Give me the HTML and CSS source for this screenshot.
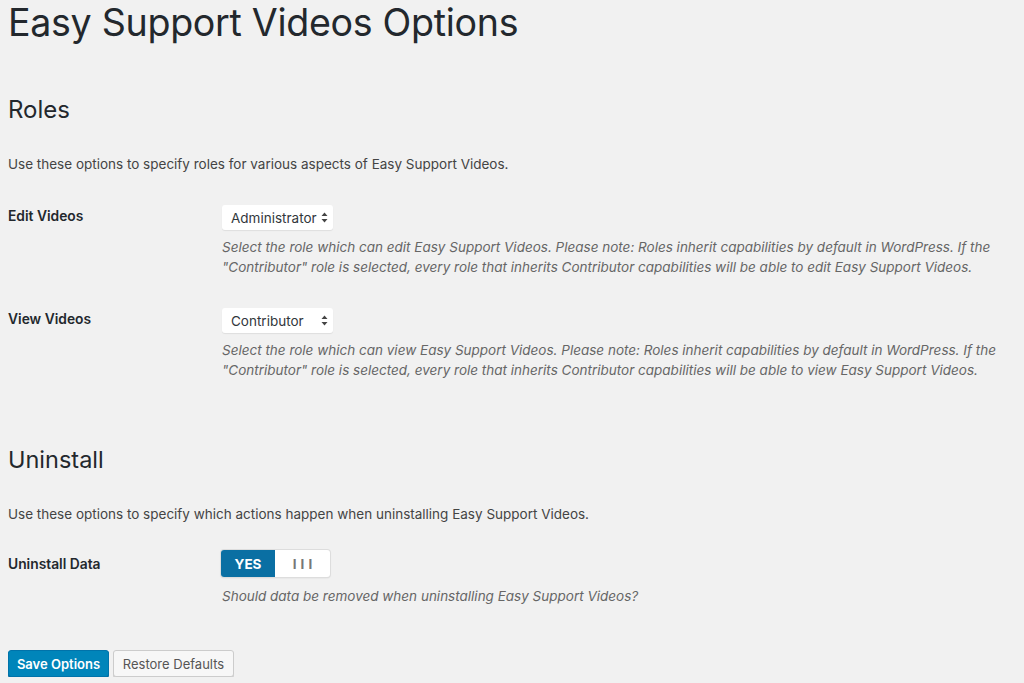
FILE: index.html
```html
<!DOCTYPE html>
<html>
<head>
<meta charset="utf-8">
<link rel="stylesheet" href="styles.css">
</head>
<body>
<div class="wrap">
  <h1 class="page-title">Easy Support Videos Options</h1>

  <h2 class="section-title first">Roles</h2>
  <p class="section-desc">Use these options to specify roles for various aspects of Easy Support Videos.</p>

  <div class="form-row">
    <div class="label">Edit Videos</div>
    <div class="field">
      <div class="select"><span>Administrator</span><svg class="arrows" width="7" height="11" viewBox="0 0 7 11"><path d="M3.5 0.5L6.5 4H0.5Z M3.5 10.5L6.5 7H0.5Z" fill="#444"/></svg></div>
      <p class="help">Select the role which can edit Easy Support Videos. Please note: Roles inherit capabilities by default in WordPress. If the "Contributor" role is selected, every role that inherits Contributor capabilities will be able to edit Easy Support Videos.</p>
    </div>
  </div>

  <div class="form-row">
    <div class="label">View Videos</div>
    <div class="field">
      <div class="select"><span>Contributor</span><svg class="arrows" width="7" height="11" viewBox="0 0 7 11"><path d="M3.5 0.5L6.5 4H0.5Z M3.5 10.5L6.5 7H0.5Z" fill="#444"/></svg></div>
      <p class="help">Select the role which can view Easy Support Videos. Please note: Roles inherit capabilities by default in WordPress. If the "Contributor" role is selected, every role that inherits Contributor capabilities will be able to view Easy Support Videos.</p>
    </div>
  </div>

  <h2 class="section-title second">Uninstall</h2>
  <p class="section-desc">Use these options to specify which actions happen when uninstalling Easy Support Videos.</p>

  <div class="form-row last-row">
    <div class="label">Uninstall Data</div>
    <div class="field toggle-field">
      <div class="toggle"><span class="toggle-on">YES</span><span class="toggle-off">III</span></div>
      <p class="help toggle-help">Should data be removed when uninstalling Easy Support Videos?</p>
    </div>
  </div>

  <div class="actions">
    <button class="btn btn-primary">Save Options</button>
    <button class="btn btn-secondary">Restore Defaults</button>
  </div>
</div>
</body>
</html>
```

FILE: styles.css
```css
html, body {
  margin: 0;
  padding: 0;
  background: #f1f1f1;
}
body {
  font-family: Inter, "Liberation Sans", sans-serif;
  color: #444;
  font-size: 13.5px;
}
.wrap {
  padding: 0 8px;
}
.page-title {
  margin: 0;
  padding-top: 1px;
  font-size: 37.6px;
  font-weight: 400;
  color: #23282d;
  line-height: 44px;
  letter-spacing: -0.3px;
}
.section-title {
  margin: 0;
  font-size: 24px;
  font-weight: 400;
  color: #23282d;
  line-height: 30px;
}
.section-title.first {
  margin-top: 50px;
}
.section-title.second {
  margin-top: 65px;
  font-size: 23.5px;
}
.section-desc {
  margin: 29px 0 0;
  line-height: 20px;
}
.form-row {
  display: grid;
  grid-template-columns: 214px 1fr;
  margin-top: 30px;
}
.form-row.last-row {
  margin-top: 28px;
}
.label {
  font-weight: 600;
  font-size: 13.8px;
  color: #23282d;
  line-height: 20px;
  padding-top: 2px;
}
.field {
  padding-top: 1px;
}
.select {
  display: inline-flex;
  align-items: center;
  justify-content: space-between;
  box-sizing: border-box;
  width: 111px;
  height: 25px;
  padding: 0 5px 0 9px;
  background: #fff;
  border-radius: 3px;
  box-shadow: 0 1px 1px rgba(0,0,0,0.08);
  color: #32373c;
}
.arrows {
  flex: none;
}
.help {
  margin: 7px 0 0;
  font-style: italic;
  color: #666;
  line-height: 20px;
}
.toggle-field {
  padding-top: 0;
  margin-top: -2px;
}
.toggle {
  display: inline-flex;
  height: 27px;
  box-sizing: border-box;
  border-radius: 3px;
  overflow: hidden;
  background: #fff;
  box-shadow: 0 0 0 1px #ddd, 0 1px 2px rgba(0,0,0,0.12);
  margin-left: -1px;
}
.toggle-on {
  width: 54px;
  background: #0a6fa3;
  color: #fff;
  font-weight: 700;
  display: flex;
  align-items: center;
  justify-content: center;
}
.toggle-off {
  width: 55px;
  color: #777;
  font-weight: 700;
  display: flex;
  align-items: center;
  justify-content: center;
  letter-spacing: 4px;
  padding-left: 4px;
  box-sizing: border-box;
}
.toggle-help {
  margin-top: 9px;
}
.actions {
  display: flex;
  gap: 4px;
  margin-top: 44px;
}
.btn {
  font-family: inherit;
  font-size: 13px;
  height: 27px;
  border-radius: 3px;
  padding: 0;
  white-space: nowrap;
  cursor: pointer;
}
.btn-primary {
  width: 101px;
  background: #0085ba;
  border: 1px solid #0073aa;
  color: #fff;
  font-weight: 600;
  box-shadow: 0 1px 0 #006799;
}
.btn-secondary {
  width: 121px;
  background: #f7f7f7;
  border: 1px solid #ccc;
  color: #555;
  box-shadow: 0 1px 0 #ccc;
}
```
